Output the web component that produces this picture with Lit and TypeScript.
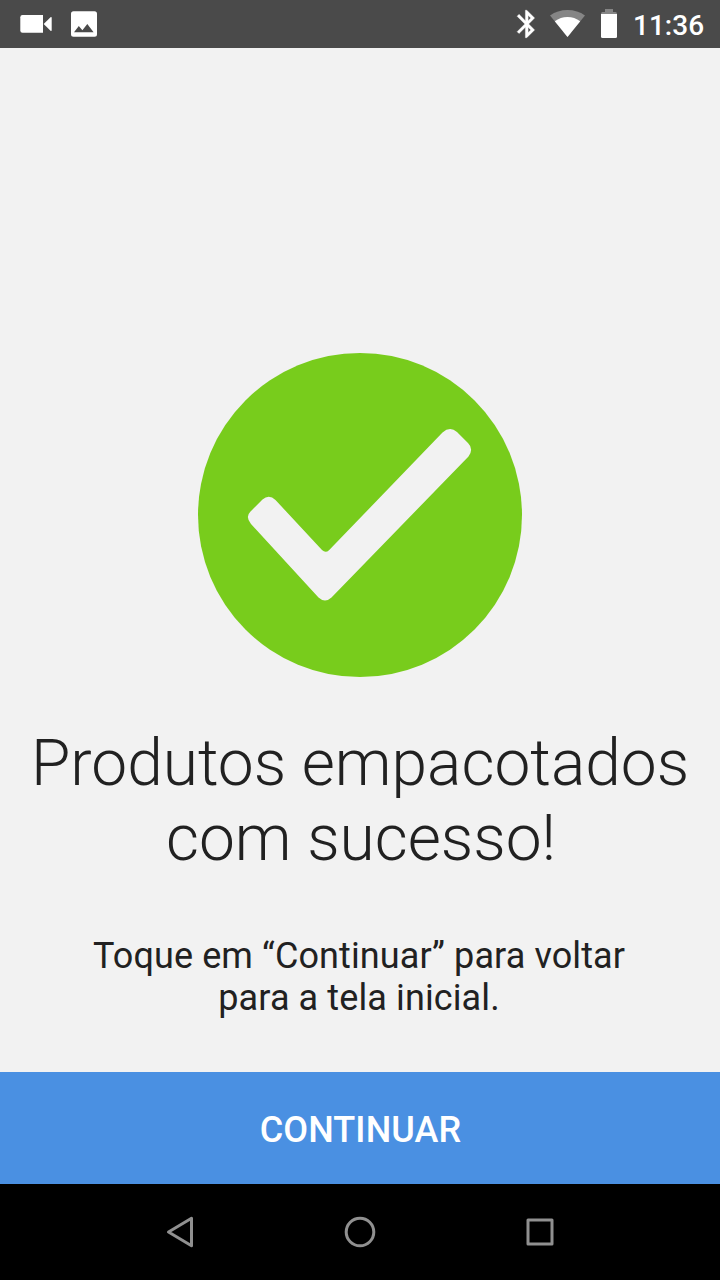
import { LitElement, html, css } from "lit";
import { customElement } from "lit/decorators.js";

@customElement("app-root")
class AppRoot extends LitElement {
  static styles = css`
    :host { display: flex; flex-direction: column; width: 720px; height: 1280px; background: #f2f2f2; font-family: Roboto, sans-serif; color: #212121; overflow: hidden; }
    svg { display: block; flex: none; }
    .status { height: 48px; background: #4a4a4a; color: #fff; display: flex; flex: none; justify-content: space-between; }
    .right { display: flex; }
    .time { box-sizing: border-box; width: 92px; padding-left: 5px; font-size: 28px; line-height: 51px; font-weight: 500; white-space: nowrap; }
    main { flex: 1; display: flex; flex-direction: column; align-items: center; text-align: center; padding-top: 304px; }
    h1 { margin: 48px 0 0; font-size: 64px; line-height: 75px; font-weight: 300; white-space: nowrap; }
    .second { padding-left: 2px; }
    p { margin: 59px 2px 0 0; font-size: 36px; line-height: 42px; letter-spacing: 0.110px; white-space: nowrap; }
    button { flex: none; height: 112px; border: 0; padding: 4px 0 0 1px; background: #4a90e2; color: #fff; font: 500 36px Roboto, sans-serif; letter-spacing: 0.100px; }
    nav { flex: none; height: 96px; background: #000; }
  `;
  render() {
    return html`
      <header class="status">
        <svg width="120" height="48" viewBox="0 0 120 48" fill="#fff">
          <path d="M22.500 15H43V32.700H22.500Q20.300 32.700 20.300 30.500V17.200Q20.300 15 22.500 15Z"/>
          <path d="M43.700 23.900L50.500 17.200Q51.700 16.500 51.700 18V30Q51.700 31.500 50.500 30.800Z"/>
          <path fill-rule="evenodd" d="M73.500 11.200H94.500Q97 11.200 97 13.700V34.300Q97 36.800 94.500 36.800H73.500Q71 36.800 71 34.300V13.700Q71 11.200 73.500 11.200ZM74 32.300H93.600L87.300 24L82.400 30.300L78.800 26Z"/>
        </svg>
        <div class="right">
          <svg width="128" height="48" viewBox="500 0 128 48">
            <path transform="translate(510.200 7.400) scale(1.380)" fill="#fff" stroke="#fff" stroke-width=".25" stroke-linejoin="round" d="M17.710 7.710L12 2h-1v7.590L6.410 5 5 6.410 10.590 12 5 17.590 6.410 19 11 14.410V22h1l5.710-5.710-4.300-4.290 4.300-4.290zM13 5.830l1.880 1.880L13 9.590V5.830zm1.880 10.460L13 18.170v-3.760l1.880 1.880z"/>
            <path d="M567.500 37L550 15.500Q557.500 10 567.500 10T585 15.500Z" fill="#858585"/>
            <path d="M567.500 37L554.800 21.300Q560.500 17 567.500 17T580.200 21.300Z" fill="#fff"/>
            <path d="M605 9H613V12H615.500Q617 12 617 14H601Q601 12 602.500 12H605Z" fill="#858585"/><path d="M601 14H617V36.500Q617 38 615.500 38H602.500Q601 38 601 36.500Z" fill="#fff"/>
          </svg>
          <span class="time">11:36</span>
        </div>
      </header>
      <main>
        <svg width="324" height="326" viewBox="198 352 324 326">
          <circle cx="360" cy="515" r="162" fill="#78cc1c"/>
          <path d="M250.500 511.500L262.500 499.500Q269 494 275.500 500L322 550Q325.500 553.500 329 550.300L442.500 432.500Q450 426 457 432L468 443Q474 449 468.500 456.500L331.500 597.500Q325 603.500 318.500 597.500L251 524Q245 517 250.500 511.500Z" fill="#f2f2f2"/>
        </svg>
        <h1>Produtos empacotados<br><span class="second">com sucesso!</span></h1>
        <p>Toque em “Continuar” para voltar<br>para a tela inicial.</p>
      </main>
      <button>CONTINUAR</button>
      <nav><svg width="720" height="96" viewBox="0 1184 720 96" fill="none" stroke="#909090" stroke-width="3" stroke-linejoin="round">
        <path d="M191.500 1218.300V1245.700L168.500 1232Z"/><circle cx="360" cy="1232" r="13.800"/><rect x="528" y="1220" width="24" height="24"/>
      </svg></nav>`;
  }
}
